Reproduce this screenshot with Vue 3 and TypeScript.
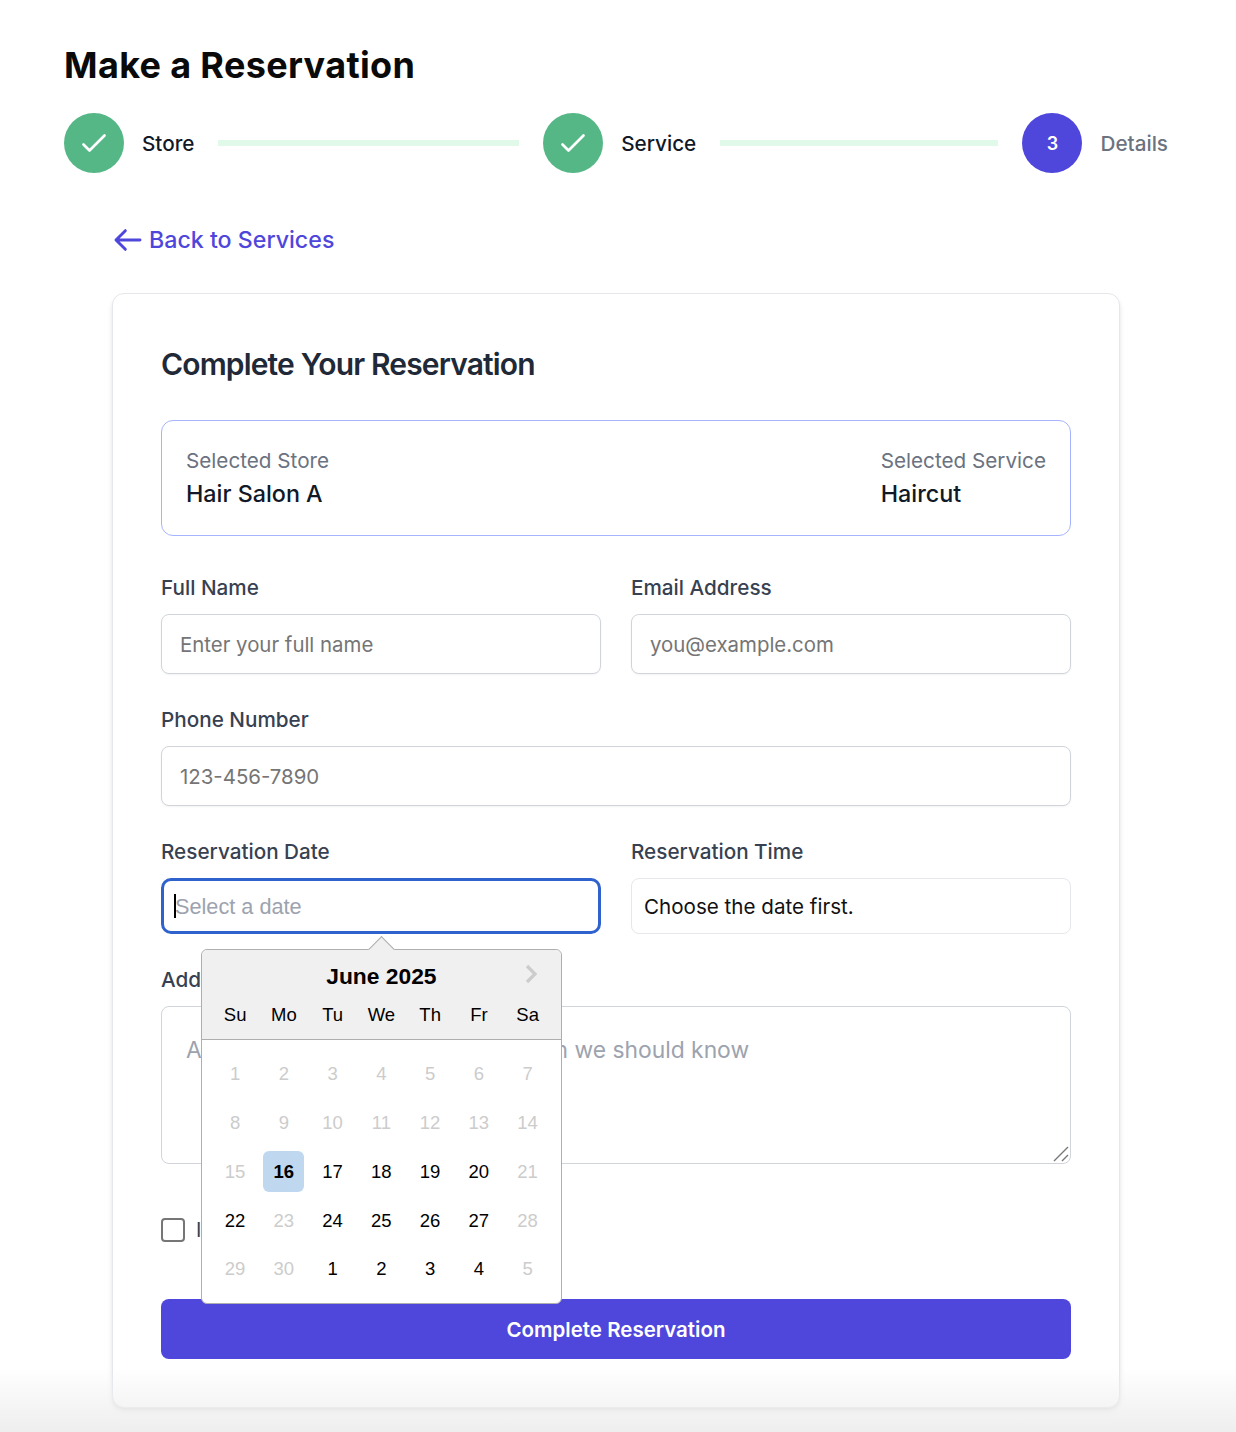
<script setup lang="ts">
type Day = { label: number; muted: boolean; selected: boolean };

const weekdays = ["Su", "Mo", "Tu", "We", "Th", "Fr", "Sa"];

const available = [17, 18, 19, 20, 22, 24, 25, 26, 27];

const june: Day[] = Array.from({ length: 30 }, (_, i) => ({
  label: i + 1,
  muted: i + 1 !== 16 && !available.includes(i + 1),
  selected: i + 1 === 16,
}));

const july: Day[] = [1, 2, 3, 4, 5].map((n) => ({
  label: n,
  muted: n === 5,
  selected: false,
}));

const days = [...june, ...july];
</script>

<template>
  <div class="page">
    <h1>Make a Reservation</h1>

    <div class="stepper">
      <div class="step">
        <span class="dot done">
          <svg width="36" height="36" viewBox="0 0 24 24" fill="none" stroke="#fff" stroke-width="1.8" stroke-linecap="round" stroke-linejoin="round">
            <path d="M5 13l4 4L19 7" />
          </svg>
        </span>
        <span class="step-name">Store</span>
        <span class="line"></span>
      </div>
      <div class="step">
        <span class="dot done">
          <svg width="36" height="36" viewBox="0 0 24 24" fill="none" stroke="#fff" stroke-width="1.8" stroke-linecap="round" stroke-linejoin="round">
            <path d="M5 13l4 4L19 7" />
          </svg>
        </span>
        <span class="step-name">Service</span>
        <span class="line"></span>
      </div>
      <div class="step last">
        <span class="dot current">3</span>
        <span class="step-name idle">Details</span>
      </div>
    </div>

    <div class="content">
      <a class="back" href="#">
        <svg width="32" height="32" viewBox="0 0 24 24" fill="none" stroke="currentColor" stroke-width="2.2" stroke-linecap="round" stroke-linejoin="round">
          <path d="M10 19l-7-7m0 0l7-7m-7 7h18" />
        </svg>
        Back to Services
      </a>

      <form class="card" @submit.prevent>
        <h2>Complete Your Reservation</h2>

        <div class="summary">
          <div>
            <p class="sum-label">Selected Store</p>
            <p class="sum-value">Hair Salon A</p>
          </div>
          <div>
            <p class="sum-label">Selected Service</p>
            <p class="sum-value">Haircut</p>
          </div>
        </div>

        <div class="row">
          <label class="field">
            <span class="label">Full Name</span>
            <input type="text" placeholder="Enter your full name" />
          </label>
          <label class="field">
            <span class="label">Email Address</span>
            <input type="email" placeholder="you@example.com" />
          </label>
        </div>

        <label class="field">
          <span class="label">Phone Number</span>
          <input type="tel" placeholder="123-456-7890" />
        </label>

        <div class="row">
          <div class="field date-field">
            <span class="label">Reservation Date</span>
            <div class="date-wrap">
              <input class="date-input" type="text" placeholder="Select a date" />
              <span class="caret"></span>
              <div class="picker">
                <span class="pointer"></span>
                <div class="picker-head">
                  <div class="month">June 2025</div>
                  <svg class="next" width="16" height="20" viewBox="0 0 16 20" fill="none" stroke="#ccc" stroke-width="3.2">
                    <path d="M3 2l8 8-8 8" />
                  </svg>
                  <div class="weekdays">
                    <span v-for="w in weekdays" :key="w">{{ w }}</span>
                  </div>
                </div>
                <div class="days">
                  <span
                    v-for="(d, i) in days"
                    :key="i"
                    class="day"
                    :class="{ muted: d.muted, selected: d.selected }"
                  >{{ d.label }}</span>
                </div>
              </div>
            </div>
          </div>
          <div class="field">
            <span class="label">Reservation Time</span>
            <div class="time-note">Choose the date first.</div>
          </div>
        </div>

        <label class="field notes">
          <span class="label">Additional Notes</span>
          <span class="notes-wrap">
            <textarea placeholder="Any special requests or information we should know"></textarea>
            <svg class="grip" width="16" height="16" viewBox="0 0 16 16" fill="none" stroke="#777" stroke-width="1.4">
              <path d="M1 15L15 1M9 15l6-6" />
            </svg>
          </span>
        </label>

        <label class="agree">
          <input type="checkbox" />
          <span>I agree to the terms</span>
        </label>

        <button class="submit" type="submit">Complete Reservation</button>
      </form>
    </div>

    <div class="fade"></div>
  </div>
</template>

<style>
body {
  background: #fff;
}
</style>

<style scoped>
.page {
  position: relative;
  box-sizing: border-box;
  width: 1236px;
  height: 1432px;
  overflow: hidden;
  padding: 45px 68px 0 64px;
  font-family: Inter, "Liberation Sans", sans-serif;
  color: #111827;
}

h1 {
  margin: 0;
  font-size: 36px;
  line-height: 40px;
  font-weight: 700;
  letter-spacing: 0.35px;
  color: #0a0a0a;
}

.stepper {
  display: flex;
  margin-top: 28px;
}

.step {
  flex: 1;
  display: flex;
  align-items: center;
}

.step.last {
  flex: none;
}

.dot {
  width: 60px;
  height: 60px;
  border-radius: 50%;
  display: flex;
  align-items: center;
  justify-content: center;
  font-size: 18px;
  font-weight: 600;
  color: #fff;
}

.dot.done {
  background: #55b686;
}

.dot.current {
  background: #4f46dc;
}

.step-name {
  margin-left: 18px;
  font-size: 20.7px;
  font-weight: 500;
  color: #111827;
}

.step-name.idle {
  color: #6b7280;
}

.line {
  flex: 1;
  height: 6px;
  margin: 0 24px;
  background: #e1f9e9;
}

.content {
  padding: 0 48px;
}

.back {
  display: flex;
  align-items: center;
  gap: 5px;
  margin-top: 51px;
  height: 32px;
  font-size: 23.2px;
  font-weight: 500;
  color: #4f46dc;
  text-decoration: none;
}

.card {
  box-sizing: border-box;
  margin-top: 37px;
  height: 1115px;
  padding: 50px 48px 48px;
  display: flex;
  flex-direction: column;
  background: #fff;
  border: 1px solid #e5e7eb;
  border-radius: 12px;
  box-shadow: 0 4px 6px -1px rgba(0, 0, 0, 0.12), 0 2px 4px -2px rgba(0, 0, 0, 0.12);
}

h2 {
  margin: 0;
  font-size: 30px;
  line-height: 40px;
  font-weight: 600;
  letter-spacing: -0.85px;
  color: #1f2937;
}

.summary {
  box-sizing: border-box;
  display: flex;
  justify-content: space-between;
  height: 116px;
  margin-top: 36px;
  margin-bottom: 38px;
  padding: 25px 24px 0;
  border: 1px solid #a5b4fc;
  border-radius: 12px;
}

.sum-label {
  margin: 0;
  font-size: 20.7px;
  line-height: 30px;
  color: #6b7280;
}

.sum-value {
  margin: 2px 0 0;
  font-size: 23.3px;
  line-height: 32px;
  font-weight: 500;
  color: #111827;
}

.row {
  display: grid;
  grid-template-columns: 1fr 1fr;
  gap: 30px;
}

.field {
  display: block;
  margin-bottom: 32px;
}

.label {
  display: block;
  margin-bottom: 12px;
  font-size: 20.7px;
  line-height: 28px;
  font-weight: 500;
  color: #374151;
}

input[type="text"],
input[type="email"],
input[type="tel"] {
  box-sizing: border-box;
  display: block;
  width: 100%;
  height: 60px;
  padding: 0 18px;
  font-family: Inter, "Liberation Sans", sans-serif;
  font-size: 20.4px;
  background: #fff;
  border: 1px solid #d1d5db;
  border-radius: 8px;
  box-shadow: 0 1px 2px rgba(0, 0, 0, 0.05);
  outline: none;
}

input::placeholder {
  color: #757575;
  opacity: 1;
}

.date-wrap {
  position: relative;
  height: 56px;
}

input.date-input {
  height: 56px;
  padding: 2px 11px 0;
  font-family: "Liberation Sans", Arial, sans-serif;
  font-size: 21.7px;
  border: 3px solid #2f62cc;
  border-radius: 10px;
  box-shadow: none;
}

input.date-input::placeholder {
  color: #9ca3af;
}

.caret {
  position: absolute;
  left: 13px;
  top: 16px;
  width: 2px;
  height: 24px;
  background: #000;
}

.time-note {
  box-sizing: border-box;
  height: 56px;
  padding: 0 12px;
  display: flex;
  align-items: center;
  font-size: 20.6px;
  color: #111;
  border: 1px solid #e5e7eb;
  border-radius: 8px;
}

.notes-wrap {
  position: relative;
  display: block;
}

textarea {
  box-sizing: border-box;
  display: block;
  width: 100%;
  height: 158px;
  padding: 29px 24px 0;
  font-family: Inter, "Liberation Sans", sans-serif;
  font-size: 22.84px;
  border: 1px solid #d1d5db;
  border-radius: 8px;
  outline: none;
  resize: none;
}

textarea::placeholder {
  color: #9ca3af;
  opacity: 1;
}

.grip {
  position: absolute;
  right: 2px;
  bottom: 2px;
}

.agree {
  display: flex;
  align-items: center;
  gap: 11px;
  margin-top: 22px;
  font-size: 20px;
  color: #374151;
}

.agree input {
  appearance: none;
  margin: 0;
  width: 24px;
  height: 24px;
  background: #fff;
  border: 2px solid #767676;
  border-radius: 4px;
}

.submit {
  height: 60px;
  margin-top: 57px;
  font-family: Inter, "Liberation Sans", sans-serif;
  font-size: 20.5px;
  font-weight: 600;
  color: #fff;
  background: #4f46dc;
  border: 0;
  border-radius: 8px;
}

.picker {
  position: absolute;
  z-index: 2;
  left: 40px;
  top: 71px;
  box-sizing: border-box;
  width: 361px;
  height: 355px;
  font-family: "Liberation Sans", Arial, sans-serif;
  background: #fff;
  border: 1px solid #aeaeae;
  border-radius: 6px;
}

.pointer {
  position: absolute;
  left: 170px;
  top: -10px;
  width: 19px;
  height: 19px;
  box-sizing: border-box;
  background: #f0f0f0;
  border-top: 1px solid #aeaeae;
  border-left: 1px solid #aeaeae;
  transform: rotate(45deg);
}

.picker-head {
  position: relative;
  box-sizing: border-box;
  height: 90px;
  padding: 11px 9px 0 8.75px;
  background: #f0f0f0;
  border-bottom: 1px solid #aeaeae;
  border-radius: 6px 6px 0 0;
}

.month {
  text-align: center;
  font-size: 22.8px;
  line-height: 30px;
  font-weight: 700;
  color: #000;
}

.next {
  position: absolute;
  right: 21px;
  top: 14px;
}

.weekdays,
.days {
  display: grid;
  grid-template-columns: repeat(7, 1fr);
  text-align: center;
}

.weekdays {
  margin-top: 9px;
  font-size: 18.5px;
  line-height: 30px;
  color: #000;
}

.days {
  padding: 10px 9px 0 8.75px;
  grid-auto-rows: 48.75px;
  justify-items: center;
  align-items: center;
}

.day {
  width: 41px;
  height: 41px;
  display: flex;
  align-items: center;
  justify-content: center;
  font-size: 18.5px;
  color: #000;
  border-radius: 6px;
}

.day.muted {
  color: #ccc;
}

.day.selected {
  background: #bfd7ef;
  font-weight: 700;
}

.fade {
  position: absolute;
  left: 0;
  right: 0;
  bottom: 0;
  height: 64px;
  background: linear-gradient(to bottom, rgba(238, 238, 238, 0), rgba(238, 238, 238, 1));
  pointer-events: none;
}
</style>
